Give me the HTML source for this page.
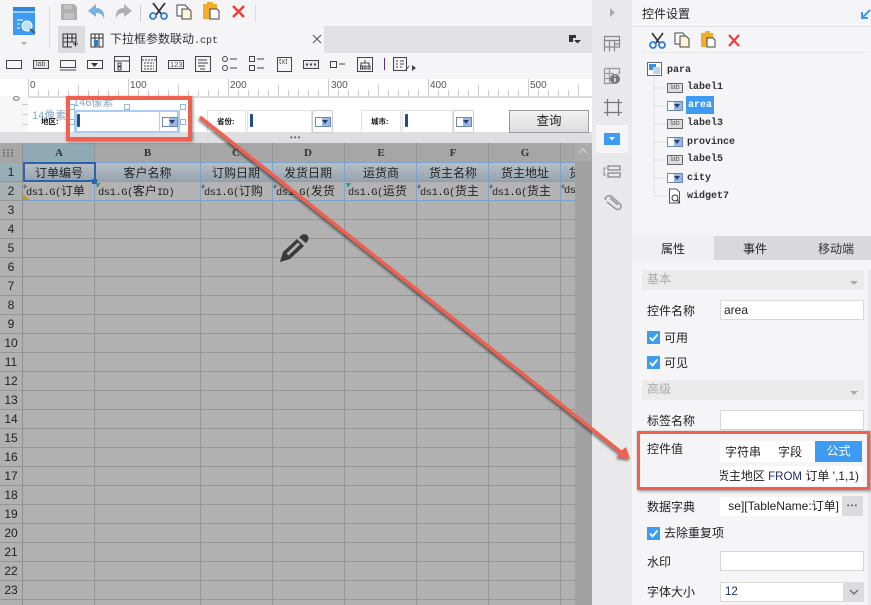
<!DOCTYPE html>
<html><head><meta charset="utf-8">
<style>
html,body{margin:0;padding:0}
body{width:871px;height:605px;overflow:hidden;position:relative;background:#f5f5f7;font-family:"Liberation Sans","Noto Sans CJK SC",sans-serif;font-size:12px;color:#222}
.a{position:absolute}
.t{position:absolute;white-space:nowrap;line-height:1}
.ch{position:absolute;top:143px;height:20px;text-align:center;line-height:20px;font-family:"Liberation Serif",serif;font-size:11px;font-weight:bold;color:#333}
.rh{position:absolute;left:0;width:22px;text-align:center;font-size:12px;color:#222;line-height:19px;height:19px}
.h1{position:absolute;top:163px;height:19px;text-align:center;line-height:20px;font-size:12px;color:#222;overflow:hidden;white-space:nowrap}
.c2{position:absolute;top:182px;height:18px;line-height:14px;padding-top:2px;font-size:10.5px;letter-spacing:-.5px;overflow:hidden;white-space:nowrap;font-family:"Liberation Mono",monospace;color:#222;padding-left:3px;box-sizing:border-box}
.c2 i{font-style:normal;font-size:12px;letter-spacing:0;font-family:"Noto Sans CJK SC",sans-serif}
.tree{position:absolute;font-family:"Liberation Mono",monospace;font-size:10px;font-weight:bold;color:#333;line-height:14px;white-space:nowrap}
.lab{position:absolute;width:14px;height:8px;border:1px solid #666;background:#ddd;color:#666;font-size:7px;line-height:8px;text-align:center;font-family:"Liberation Sans",sans-serif;font-weight:normal}
.dd{position:absolute;width:14px;height:8px;border:1px solid #6d86b4;background:linear-gradient(90deg,#fff 0 6px,#9db8e0 6px)}
.dd:after{content:"";position:absolute;right:2px;top:2px;border:3.5px solid transparent;border-top:4px solid #1f3f80}
.lbl{position:absolute;font-size:12px;color:#222;line-height:14px;white-space:nowrap}
.inp{position:absolute;background:#fff;border:1px solid #d8d8d8;box-sizing:border-box}
.sec{position:absolute;left:642px;width:222px;height:20px;background:#ebebeb;color:#aaa;font-size:12px;line-height:18px;padding-left:5px;box-sizing:border-box}
.sec:after{content:"";position:absolute;right:6px;top:11px;border:4px solid transparent;border-top:4px solid #aaa}
.cb{position:absolute;left:647px;width:13px;height:13px;background:#3d9bf3;color:#fff}
.sq{position:absolute;width:4px;height:4px;border:1px solid #8fb8de;background:#fff}
.tick{position:absolute;top:90px;width:1px;height:6px;background:#ccc}
</style></head><body>

<!-- top toolbar -->
<div class="a" style="left:0;top:0;width:592px;height:26px;background:#f5f5f7"></div>
<div class="a" style="left:58px;top:26px;width:534px;height:27px;background:#e1e1e3"></div>
<div class="a" style="left:58px;top:26px;width:27px;height:27px;background:#dcdcde"></div>
<div class="a" style="left:85px;top:26px;width:239px;height:27px;background:#f5f5f7"></div>
<div class="a" style="left:49px;top:6px;width:1px;height:42px;background:#ddd"></div>
<div class="a" style="left:140px;top:5px;width:1px;height:17px;background:#ccc"></div>
<div class="a" style="left:255px;top:5px;width:1px;height:17px;background:#ddd"></div>

<svg class="a" style="left:0;top:0" width="592" height="80" viewBox="0 0 592 80">
<!-- logo -->
<path d="M13 7h22v28H13z" fill="#3d9bf3"/><path d="M13 7h22v4H13z" fill="#2e86e0"/><path d="M13 12h22" stroke="#fff" stroke-width="1"/>
<circle cx="27" cy="26" r="5" fill="#bfe0fb" stroke="#fff"/><path d="M30 29l5 4" stroke="#555" stroke-width="2"/>
<path d="M17 20h6M17 24h3M17 28h3" stroke="#fff"/>
<path d="M21 42l3 3 3-3z" fill="#aaa"/>
<!-- save -->
<path d="M61 4h13l3 3v13H61z" fill="#b0b0b0"/><path d="M64 5h8v4h-8zM64 13h10v6H64z" fill="#c2c2c2"/>
<!-- undo/redo -->
<path d="M96 4L88 11l8 6v-4c5 0 7 2 8 6 1-7-2-11-8-11z" fill="#7cb0e0"/>
<path d="M124 4l8 7-8 6v-4c-5 0-7 2-8 6-1-7 2-11 8-11z" fill="#b0b0b0"/>
<!-- cut -->
<g fill="none"><path d="M153 3l9 12M165 3l-9 12" stroke="#333" stroke-width="1.8"/><circle cx="153" cy="16" r="3" stroke="#2e7fd6" stroke-width="1.8"/><circle cx="164" cy="16" r="3" stroke="#2e7fd6" stroke-width="1.8"/></g>
<!-- copy -->
<path d="M177 5h8l3 3v8h-11z" fill="#fff" stroke="#444"/><path d="M182 9h7l2 2v8h-9z" fill="#fdf3d8" stroke="#444"/>
<!-- paste -->
<path d="M203 4h14v15h-14z" fill="#f4ac2b"/><path d="M207 2h6v3h-6z" fill="#f4ac2b"/><path d="M210 9h7l2 2v8h-9z" fill="#fff" stroke="#444"/>
<!-- X -->
<path d="M233 6l11 11M244 6l-11 11" stroke="#e8403a" stroke-width="2.4"/>
<!-- tab icons -->
<path d="M63 34h13v8H63zM67.500 34v13M72 34v8M63 38h13M63 42v5h9M73 44h5M75.500 41.500v5" fill="none" stroke="#333"/>
<path d="M91 34h12v13H91zM95 34v13M99 34v13M91 38h12" fill="none" stroke="#333"/><path d="M94 40h4v6h-4z" fill="#2d7ccc"/>
<path d="M313 35l8 8M321 35l-8 8" stroke="#555" stroke-width="1.100"/>
<!-- right top icon -->
<path d="M569 35h7v3h-3v4h-4z" fill="#333"/><path d="M574 40h7l-3.500 3.500z" fill="#333"/>
<!-- widgets row -->
<g fill="none" stroke="#444">
<rect x="6.500" y="60.500" width="15" height="8" />
<rect x="33.500" y="60.500" width="15" height="8" fill="#e4e4e4"/>
<path d="M60.500 60.500h15v7h-15zM60 70h16"/>
<rect x="87.500" y="60.500" width="15" height="8"/>
<rect x="114.500" y="56.500" width="15" height="15"/><path d="M115 61h14M118 63h3v3h-3zM118 67h3v3h-3z"/>
<rect x="141.500" y="56.500" width="15" height="15"/><path d="M142 60h14M144 63h10M144 66h10M144 69h10" stroke-dasharray="2 1"/>
<rect x="168.500" y="60.500" width="15" height="8"/>
<rect x="195.500" y="56.500" width="15" height="15"/><path d="M198 60h9M198 63h10M198 66h7M200 69h5"/>
<circle cx="225" cy="59" r="2.500"/><circle cx="225" cy="68" r="2.500"/><path d="M230 59h7M230 68h7"/>
<rect x="249.500" y="56.500" width="5" height="5"/><rect x="249.500" y="65.500" width="5" height="5"/><path d="M257 59h7M257 68h7"/>
<rect x="277.500" y="57.500" width="14" height="14"/>
<rect x="303.500" y="60.500" width="15" height="8" fill="#e8e8e8"/><path d="M306 64.500h2M310 64.500h2M314 64.500h2" stroke-width="2"/>
<rect x="330.500" y="61.500" width="6" height="6"/><path d="M339 64h6"/>
<rect x="357.500" y="57.500" width="15" height="14"/><path d="M365 60v3M361 66v-3h8v3M360.500 66h2v3h-2zM364 66h2v3h-2zM368 66h2v3h-2z"/>
<rect x="393.500" y="57.500" width="13" height="13"/><path d="M396 61h2M400 61h4M396 64h2M400 64h4M396 67h2M400 67h2M405 71l4-5"/>
</g>
<path d="M384.500 58v12" stroke="#5a2a80" stroke-width="1"/><path d="M412 65l4 3-4 3z" fill="#444"/>
<path d="M91 63h7l-3.500 4z" fill="#333"/>
</svg>
<div class="t" style="left:110px;top:33px;font-size:12px;color:#333">下拉框参数联动<span style="font-family:'Liberation Mono',monospace;font-size:10px">.cpt</span></div>
<div class="t" style="left:36px;top:61px;font-size:7px;color:#555;width:12px">lab</div>
<div class="t" style="left:170px;top:61px;font-size:7.500px;color:#555">123</div>
<div class="t" style="left:279px;top:58px;font-size:8px;color:#555">txt</div>

<!-- ruler -->
<div class="a" style="left:0;top:79px;width:592px;height:17px;background:#fff"></div>
<div class="a" style="left:0;top:96px;width:28px;height:36px;background:#f7f7f7"></div>
<div class="a" style="left:28px;top:79px;width:1px;height:17px;background:#ccc"></div>
<div class="a" style="left:128px;top:79px;width:1px;height:17px;background:#ccc"></div>
<div class="a" style="left:228px;top:79px;width:1px;height:17px;background:#ccc"></div>
<div class="a" style="left:328px;top:79px;width:1px;height:17px;background:#ccc"></div>
<div class="a" style="left:428px;top:79px;width:1px;height:17px;background:#ccc"></div>
<div class="a" style="left:528px;top:79px;width:1px;height:17px;background:#ccc"></div>
<div class="a" style="left:78px;top:85px;width:1px;height:11px;background:#ccc"></div>
<div class="a" style="left:178px;top:85px;width:1px;height:11px;background:#ccc"></div>
<div class="a" style="left:278px;top:85px;width:1px;height:11px;background:#ccc"></div>
<div class="a" style="left:378px;top:85px;width:1px;height:11px;background:#ccc"></div>
<div class="a" style="left:478px;top:85px;width:1px;height:11px;background:#ccc"></div>
<div class="a" style="left:578px;top:85px;width:1px;height:11px;background:#ccc"></div>
<div class="tick" style="left:38px"></div><div class="tick" style="left:48px"></div><div class="tick" style="left:58px"></div><div class="tick" style="left:68px"></div><div class="tick" style="left:88px"></div><div class="tick" style="left:98px"></div><div class="tick" style="left:108px"></div><div class="tick" style="left:118px"></div>
<div class="tick" style="left:138px"></div><div class="tick" style="left:148px"></div><div class="tick" style="left:158px"></div><div class="tick" style="left:168px"></div><div class="tick" style="left:188px"></div><div class="tick" style="left:198px"></div><div class="tick" style="left:208px"></div><div class="tick" style="left:218px"></div>
<div class="tick" style="left:238px"></div><div class="tick" style="left:248px"></div><div class="tick" style="left:258px"></div><div class="tick" style="left:268px"></div><div class="tick" style="left:288px"></div><div class="tick" style="left:298px"></div><div class="tick" style="left:308px"></div><div class="tick" style="left:318px"></div>
<div class="tick" style="left:338px"></div><div class="tick" style="left:348px"></div><div class="tick" style="left:358px"></div><div class="tick" style="left:368px"></div><div class="tick" style="left:388px"></div><div class="tick" style="left:398px"></div><div class="tick" style="left:408px"></div><div class="tick" style="left:418px"></div>
<div class="tick" style="left:438px"></div><div class="tick" style="left:448px"></div><div class="tick" style="left:458px"></div><div class="tick" style="left:468px"></div><div class="tick" style="left:488px"></div><div class="tick" style="left:498px"></div><div class="tick" style="left:508px"></div><div class="tick" style="left:518px"></div><div class="tick" style="left:538px"></div><div class="tick" style="left:548px"></div><div class="tick" style="left:558px"></div><div class="tick" style="left:568px"></div>
<div class="t" style="left:30px;top:81px;font-size:10px;color:#555">0</div>
<div class="t" style="left:130px;top:81px;font-size:10px;color:#555">100</div>
<div class="t" style="left:230px;top:81px;font-size:10px;color:#555">200</div>
<div class="t" style="left:331px;top:81px;font-size:10px;color:#555">300</div>
<div class="t" style="left:430px;top:81px;font-size:10px;color:#555">400</div>
<div class="t" style="left:530px;top:81px;font-size:10px;color:#555">500</div>
<div class="t" style="left:13px;top:94px;font-size:9px;color:#555;transform:rotate(90deg)">0</div>
<div class="a" style="left:22px;top:104px;width:6px;height:1px;background:#ccc"></div>
<div class="a" style="left:22px;top:114px;width:6px;height:1px;background:#ccc"></div>
<div class="a" style="left:22px;top:124px;width:6px;height:1px;background:#ccc"></div>

<!-- param area -->
<div class="a" style="left:28px;top:96px;width:564px;height:36px;background:#fff;border-top:2px solid #ddd;box-sizing:border-box"></div>
<div class="a" style="left:0;top:132px;width:592px;height:11px;background:#dedee0"></div>
<div class="t" style="left:290px;top:134px;font-size:8px;letter-spacing:1px;color:#666;line-height:7px">•••</div>

<div class="t" style="left:73px;top:98px;font-size:11px;color:#8ba6c9">146像素</div>
<div class="t" style="left:32px;top:111px;font-size:11px;color:#8ba6c9">14像素</div>
<div class="t" style="left:41px;top:118px;font-size:7.500px;font-weight:bold;color:#111">地区:</div>
<div class="a" style="left:74px;top:110px;width:106px;height:23px;box-sizing:border-box;background:#fff"></div>
<div class="a" style="left:74px;top:110px;width:3px;height:23px;background:#a8cdf0"></div>
<div class="a" style="left:177px;top:110px;width:3px;height:23px;background:#a8cdf0"></div>
<div class="a" style="left:74px;top:110px;width:106px;height:2px;background:#a8cdf0"></div>
<div class="a" style="left:74px;top:131px;width:106px;height:2px;background:#a8cdf0"></div>
<div class="a" style="left:77px;top:114px;width:3px;height:13px;background:#1f4e88;border-radius:1px"></div>
<div class="a" style="left:159px;top:112px;width:1px;height:19px;background:#ccc"></div>
<div class="dd" style="left:162px;top:117px;width:14px"></div>
<div class="sq" style="left:69px;top:104px"></div><div class="sq" style="left:124px;top:104px"></div><div class="sq" style="left:180px;top:104px"></div>
<div class="sq" style="left:69px;top:119px"></div><div class="sq" style="left:180px;top:119px"></div>

<div class="a" style="left:207px;top:110px;width:39px;height:23px;border:1px solid #e2e2e2;box-sizing:border-box"></div>
<div class="t" style="left:217px;top:118px;font-size:7.500px;font-weight:bold;color:#111">省份:</div>
<div class="a" style="left:247px;top:110px;width:65px;height:23px;border:1px solid #e2e2e2;box-sizing:border-box"></div>
<div class="a" style="left:250px;top:114px;width:3px;height:13px;background:#1f4e88;border-radius:1px"></div>
<div class="a" style="left:312px;top:110px;width:21px;height:23px;border:1px solid #ccc;border-radius:2px;box-sizing:border-box"></div>
<div class="dd" style="left:315px;top:117px;width:14px"></div>
<div class="a" style="left:361px;top:110px;width:40px;height:23px;border:1px solid #e2e2e2;box-sizing:border-box"></div>
<div class="t" style="left:371px;top:118px;font-size:7.500px;font-weight:bold;color:#111">城市:</div>
<div class="a" style="left:402px;top:110px;width:51px;height:23px;border:1px solid #e2e2e2;box-sizing:border-box"></div>
<div class="a" style="left:405px;top:114px;width:3px;height:13px;background:#1f4e88;border-radius:1px"></div>
<div class="a" style="left:453px;top:110px;width:21px;height:23px;border:1px solid #ccc;border-radius:2px;box-sizing:border-box"></div>
<div class="dd" style="left:456px;top:117px;width:14px"></div>
<div class="a" style="left:509px;top:110px;width:80px;height:23px;border:1px solid #9a9a9a;box-sizing:border-box;background:linear-gradient(#f2f2f2,#dcdcdc);text-align:center;line-height:21px;font-size:12.500px;color:#222">查询</div>

<!-- grid -->
<div class="a" style="left:0;top:143px;width:575px;height:462px;background:#b1b1b1;overflow:hidden;background-image:linear-gradient(#959595 1px,transparent 1px);background-size:100% 19px;background-position:0 0px"></div>
<div class="a" style="left:0;top:143px;width:575px;height:20px;background:#a6a6a6"></div>
<div class="a" style="left:23px;top:143px;width:72px;height:20px;background:#90aab5"></div>
<div class="a" style="left:0;top:163px;width:23px;height:38px;background:#a8b0b4"></div>
<div class="a" style="left:0;top:163px;width:23px;height:19px;background:#97afb9"></div>
<div class="a" style="left:0;top:181px;width:23px;height:1px;background:#959595"></div>
<div class="a" style="left:0;top:200px;width:23px;height:1px;background:#959595"></div>
<!-- column lines -->
<div class="a" style="left:22px;top:143px;width:1px;height:462px;background:#8f8f8f"></div>
<div class="a" style="left:94px;top:143px;width:1px;height:462px;background:#959595"></div>
<div class="a" style="left:200px;top:143px;width:1px;height:462px;background:#959595"></div>
<div class="a" style="left:272px;top:143px;width:1px;height:462px;background:#959595"></div>
<div class="a" style="left:344px;top:143px;width:1px;height:462px;background:#959595"></div>
<div class="a" style="left:416px;top:143px;width:1px;height:462px;background:#959595"></div>
<div class="a" style="left:488px;top:143px;width:1px;height:462px;background:#959595"></div>
<div class="a" style="left:560px;top:143px;width:1px;height:462px;background:#959595"></div>
<!-- row 1 & 2 -->
<div class="a" style="left:23px;top:163px;width:552px;height:19px;background:linear-gradient(#b8c0c6,#94a2ad)"></div>
<div class="a" style="left:23px;top:182px;width:552px;height:19px;background:#b3b3b3"></div>
<div class="a" style="left:23px;top:162px;width:552px;height:1px;background:#7ea3c8"></div>
<div class="a" style="left:23px;top:181px;width:552px;height:1px;background:#7ea3c8"></div>
<div class="a" style="left:23px;top:200px;width:552px;height:1px;background:#7ea3c8"></div>
<div class="a" style="left:94px;top:163px;width:1px;height:38px;background:#7ea3c8"></div>
<div class="a" style="left:200px;top:163px;width:1px;height:38px;background:#7ea3c8"></div>
<div class="a" style="left:272px;top:163px;width:1px;height:38px;background:#7ea3c8"></div>
<div class="a" style="left:344px;top:163px;width:1px;height:38px;background:#7ea3c8"></div>
<div class="a" style="left:416px;top:163px;width:1px;height:38px;background:#7ea3c8"></div>
<div class="a" style="left:488px;top:163px;width:1px;height:38px;background:#7ea3c8"></div>
<div class="a" style="left:560px;top:163px;width:1px;height:38px;background:#7ea3c8"></div>

<div class="ch" style="left:23px;width:72px">A</div><div class="ch" style="left:95px;width:105px">B</div><div class="ch" style="left:200px;width:72px">C</div><div class="ch" style="left:272px;width:72px">D</div><div class="ch" style="left:345px;width:72px">E</div><div class="ch" style="left:417px;width:72px">F</div><div class="ch" style="left:489px;width:72px">G</div>
<svg class="a" style="left:3px;top:149px" width="11" height="9" fill="#7c7c7c"><path d="M0 0h2v2H0zM4 0h2v2H4zM8 0h2v2H8zM0 3h2v2H0zM4 3h2v2H4zM8 3h2v2H8zM0 6h2v2H0zM4 6h2v2H4zM8 6h2v2H8z"/></svg>

<div class="h1" style="left:23px;width:72px">订单编号</div><div class="h1" style="left:95px;width:105px">客户名称</div><div class="h1" style="left:200px;width:72px">订购日期</div><div class="h1" style="left:272px;width:72px">发货日期</div><div class="h1" style="left:345px;width:72px">运货商</div><div class="h1" style="left:417px;width:72px">货主名称</div><div class="h1" style="left:489px;width:72px">货主地址</div><div class="h1" style="left:561px;width:14px;text-align:left;padding-left:8px">货</div>
<div class="c2" style="left:23px;width:71px">ds1.G(<i>订单</i></div>
<div class="c2" style="left:95px;width:105px">ds1.G(<i>客户</i>ID)</div>
<div class="c2" style="left:201px;width:71px">ds1.G(<i>订购</i><br>..</div>
<div class="c2" style="left:273px;width:71px">ds1.G(<i>发货</i><br>..</div>
<div class="c2" style="left:345px;width:71px">ds1.G(<i>运货</i><br>.</div>
<div class="c2" style="left:417px;width:71px">ds1.G(<i>货主</i><br>..</div>
<div class="c2" style="left:489px;width:71px">ds1.G(<i>货主</i><br>...</div>
<div class="c2" style="left:561px;width:14px">ds</div>

<div class="rh" style="top:163px">1</div><div class="rh" style="top:182px">2</div><div class="rh" style="top:201px">3</div><div class="rh" style="top:220px">4</div><div class="rh" style="top:239px">5</div><div class="rh" style="top:258px">6</div><div class="rh" style="top:277px">7</div><div class="rh" style="top:296px">8</div><div class="rh" style="top:315px">9</div><div class="rh" style="top:334px">10</div><div class="rh" style="top:353px">11</div><div class="rh" style="top:372px">12</div><div class="rh" style="top:391px">13</div><div class="rh" style="top:410px">14</div><div class="rh" style="top:429px">15</div><div class="rh" style="top:448px">16</div><div class="rh" style="top:467px">17</div><div class="rh" style="top:486px">18</div><div class="rh" style="top:505px">19</div><div class="rh" style="top:524px">20</div><div class="rh" style="top:543px">21</div><div class="rh" style="top:562px">22</div><div class="rh" style="top:581px">23</div>

<div class="a" style="left:23px;top:162px;width:73px;height:20px;border:2px solid #2b62ad;box-sizing:border-box"></div>
<div class="a" style="left:92px;top:179px;width:5px;height:5px;background:#2b62ad"></div>

<!-- scrollbar -->
<div class="a" style="left:575px;top:143px;width:17px;height:462px;background:#a2a2a2"></div>
<div class="a" style="left:575px;top:143px;width:17px;height:18px;background:#ababab"></div>
<svg class="a" style="left:575px;top:143px" width="17" height="18"><path d="M4 10l4-4 4 4" fill="none" stroke="#ccc" stroke-width="1.500"/></svg>

<!-- right sidebar -->
<div class="a" style="left:592px;top:0;width:40px;height:605px;background:#e9e9eb"></div>
<div class="a" style="left:632px;top:0;width:239px;height:605px;background:#f5f5f7"></div>
<div class="a" style="left:596px;top:125px;width:32px;height:28px;background:#f5f5f7"></div>
<svg class="a" style="left:590px;top:0" width="42" height="220">
<path d="M20 8l5 4.500-5 4.500z" fill="#aaa"/>
<path d="M14.500 36.500h15v4h-15zM14.500 36.500v15M19.500 40.500v11M24.500 40.500v11M29.500 36.500v11M24 44h6M14 47h16" fill="none" stroke="#888" stroke-width="1.200"/>
<path d="M14.500 68.500h15v5h-2M14.500 68.500v15h8M14 73.500h10M19.500 68.500v15M14 78.500h8" fill="none" stroke="#999" stroke-width="1.200"/>
<circle cx="25" cy="79" r="5" fill="#777"/><path d="M25 78v4M25 75.500v1" stroke="#fff" stroke-width="1.300"/>
<path d="M17.500 102.500h11v10h-11zM14 102.500h18M14 112.500h18M17.500 99v17M28.500 99v17" fill="none" stroke="#777" stroke-width="1.300"/>
<rect x="14" y="133" width="16" height="12" fill="#3d9bf3"/><path d="M19 137h6l-3 3.500z" fill="#fff"/>
<path d="M18 166h12v4H18zM18 173h12v4H18z" fill="none" stroke="#888" stroke-width="1.300"/><path d="M16 168h-2v7h2" fill="none" stroke="#888"/>
<path d="M16 200l-1-1c2-4 5-4 7-2l8 7c3 3-1 7-4 5l-9-7M20 198l8 7" fill="none" stroke="#999" stroke-width="1.600"/>
</svg>
<svg class="a" style="left:632px;top:0" width="239" height="60">
<path d="M238 10l-8 8M230 12v6h6" fill="none" stroke="#3d9bf3" stroke-width="2"/>
<g fill="none"><path d="M20 33l8 11M31 33l-8 11" stroke="#333" stroke-width="1.600"/><circle cx="21" cy="45" r="3" stroke="#2e7fd6" stroke-width="1.800"/><circle cx="30" cy="45" r="3" stroke="#2e7fd6" stroke-width="1.800"/></g>
<path d="M43 33h8l2 3v8H43z" fill="#fff" stroke="#444"/><path d="M48 36h6l3 3v8h-9z" fill="#fdf3d8" stroke="#444"/>
<path d="M69 33h12v14H69z" fill="#f4ac2b"/><path d="M73 31h5v3h-5z" fill="#f4ac2b"/><path d="M75 38h6l2 2v7h-8z" fill="#fff" stroke="#444"/>
<path d="M97 35l10 11M107 35l-10 11" stroke="#e8403a" stroke-width="2.200"/>
</svg>
<div class="t" style="left:642px;top:8px;font-size:12px;color:#222">控件设置</div>
<div class="a" style="left:632px;top:26px;width:239px;height:1px;background:#dfdfe1"></div>
<div class="a" style="left:642px;top:52px;width:226px;height:1px;background:#e8e8ea"></div>

<!-- tree -->
<svg class="a" style="left:647px;top:62px" width="30" height="140"><rect x="0.500" y="0.500" width="14" height="13" fill="#fff" stroke="#666"/><rect x="2" y="2" width="7" height="6" fill="#3b8fd8"/><rect x="6" y="5" width="7" height="7" fill="#bcd6f2"/><path d="M7 14v120M7 26h12M7 44h12M7 62h12M7 80h12M7 98h12M7 116h12M7 134h15" stroke="#e2e2e2" fill="none"/></svg>
<div class="tree" style="left:667px;top:64px">para</div>
<div class="lab" style="left:667px;top:83px">lab</div><div class="tree" style="left:687px;top:81px">label1</div>
<div class="dd" style="left:667px;top:101px"></div>
<div class="a" style="left:686px;top:96px;width:28px;height:18px;background:#3d9bf3"></div><div class="tree" style="left:688px;top:99px;color:#fff">area</div>
<div class="lab" style="left:667px;top:119px">lab</div><div class="tree" style="left:687px;top:117px">label3</div>
<div class="dd" style="left:667px;top:137px"></div><div class="tree" style="left:687px;top:136px">province</div>
<div class="lab" style="left:667px;top:155px">lab</div><div class="tree" style="left:687px;top:153px">label5</div>
<div class="dd" style="left:667px;top:173px"></div><div class="tree" style="left:687px;top:172px">city</div>
<svg class="a" style="left:668px;top:188px" width="14" height="16"><path d="M1.500 1h7l3 3v11h-10z" fill="#fff" stroke="#555"/><circle cx="7" cy="10" r="3" fill="none" stroke="#333"/><path d="M9 12l3 3" stroke="#333"/></svg>
<div class="tree" style="left:687px;top:190px">widget7</div>

<!-- tabs -->
<div class="a" style="left:632px;top:236px;width:239px;height:24px;background:#d9d9db"></div>
<div class="a" style="left:632px;top:236px;width:82px;height:24px;background:#f0f0f2"></div>
<div class="t" style="left:661px;top:243px;font-size:12px;color:#222">属性</div>
<div class="t" style="left:743px;top:243px;font-size:12px;color:#222">事件</div>
<div class="t" style="left:818px;top:243px;font-size:12px;color:#333">移动端</div>
<div class="a" style="left:868px;top:270px;width:3px;height:335px;background:#e8e8ea"></div>

<div class="sec" style="top:270px">基本</div>
<div class="lbl" style="left:647px;top:304px">控件名称</div>
<div class="inp" style="left:720px;top:300px;width:144px;height:20px;padding-left:3px;line-height:18px;font-size:12px">area</div>
<div class="cb" style="top:331px"><svg width="13" height="13" style="display:block"><path d="M3 6.500l2.500 3 5-6" fill="none" stroke="#fff" stroke-width="1.800"/></svg></div>
<div class="lbl" style="left:664px;top:331px">可用</div>
<div class="cb" style="top:356px"><svg width="13" height="13" style="display:block"><path d="M3 6.500l2.500 3 5-6" fill="none" stroke="#fff" stroke-width="1.800"/></svg></div>
<div class="lbl" style="left:664px;top:356px">可见</div>
<div class="sec" style="top:380px">高级</div>
<div class="lbl" style="left:647px;top:414px">标签名称</div>
<div class="inp" style="left:720px;top:410px;width:144px;height:20px"></div>

<div class="lbl" style="left:647px;top:442px">控件值</div>
<div class="a" style="left:720px;top:441px;width:142px;height:21px;background:#fff"></div>
<div class="a" style="left:815px;top:441px;width:47px;height:21px;background:#3d9bf3;color:#fff;text-align:center;line-height:21px;font-size:12px">公式</div>
<div class="t" style="left:725px;top:446px;font-size:12px">字符串</div>
<div class="t" style="left:778px;top:446px;font-size:12px">字段</div>
<div class="inp" style="left:720px;top:466px;width:143px;height:20px;overflow:hidden;border:none;white-space:nowrap;line-height:20px;font-size:12px"><span class="a" style="right:4px;top:0">货主地区 <span style="color:#1c2f6b;font-size:11.500px">FROM</span> 订单 ',1,1)</span></div>

<div class="lbl" style="left:647px;top:500px">数据字典</div>
<div class="inp" style="left:720px;top:497px;width:122px;height:19px;overflow:hidden;white-space:nowrap;line-height:19px;font-size:12px;border:none;background:#fff"><span class="a" style="right:3px;top:0">se][TableName:订单]</span></div>
<div class="a" style="left:842px;top:496px;width:21px;height:20px;background:#dcdcde;color:#777;text-align:center;line-height:20px;font-size:8px;letter-spacing:1px">•••</div>
<div class="cb" style="top:527px"><svg width="13" height="13" style="display:block"><path d="M3 6.500l2.500 3 5-6" fill="none" stroke="#fff" stroke-width="1.800"/></svg></div>
<div class="lbl" style="left:664px;top:526px">去除重复项</div>
<div class="lbl" style="left:647px;top:555px">水印</div>
<div class="inp" style="left:720px;top:551px;width:144px;height:20px"></div>
<div class="lbl" style="left:647px;top:585px">字体大小</div>
<div class="inp" style="left:720px;top:582px;width:124px;height:20px;line-height:18px;font-size:11.500px;padding-left:4px;color:#1c2f6b">12</div>
<div class="a" style="left:844px;top:582px;width:20px;height:20px;background:#dcdcde"></div>
<svg class="a" style="left:844px;top:582px" width="20" height="20"><path d="M6 8l4 4 4-4" fill="none" stroke="#666" stroke-width="1.300"/></svg>

<!-- red annotations -->
<div class="a" style="left:66px;top:96px;width:126px;height:45px;border:4px solid #f0604f;box-sizing:border-box;box-shadow:1px 1px 3px rgba(0,0,0,.45)"></div>
<div class="a" style="left:637px;top:431px;width:233px;height:59px;border:3px solid #f0604f;box-sizing:border-box;box-shadow:1px 1px 3px rgba(0,0,0,.45)"></div>
<svg class="a" style="left:190px;top:105px;overflow:visible" width="450" height="365">
<defs><filter id="f" x="-5%" y="-5%" width="110%" height="110%"><feDropShadow dx="-1" dy="2" stdDeviation="1.200" flood-color="#000" flood-opacity=".5"/></filter></defs>
<g filter="url(#f)"><path d="M10 12L432 348" stroke="#f0604f" stroke-width="3.500" fill="none"/><path d="M440 354L427 352L431 346L436 342Z" fill="#f0604f"/></g>
</svg>

<!-- pencil -->
<svg class="a" style="left:278px;top:230px" width="34" height="34"><path d="M2 32l3-10L19 9l7 7-14 13z" fill="#3a3a3a"/><path d="M8.500 23.500L20 12.500l2 2L10.500 25.500z" fill="#b1b1b1"/><path d="M21.500 7.500c1-3 6-4.500 8-2s1 6-2 7.500z" fill="#3a3a3a"/></svg>

<!-- corner marks -->
<svg class="a" style="left:0;top:0" width="600" height="205"><path d="M23 200h7l-7-6z" fill="#c99a14"/><path d="M96 183h5l-4 5z" fill="#2c9a80"/><path d="M346 183h5l-3 5z" fill="#2c9a80"/>
<path d="M25 184v3M23.500 186l1.500 2 1.500-2M203 184v3M201.500 186l1.500 2 1.500-2M275 184v3M273.500 186l1.500 2 1.500-2M419 184v3M417.500 186l1.500 2 1.500-2M491 184v3M489.500 186l1.500 2 1.500-2M563 184v3M561.500 186l1.500 2 1.500-2" stroke="#666" fill="none"/></svg>
</body></html>
